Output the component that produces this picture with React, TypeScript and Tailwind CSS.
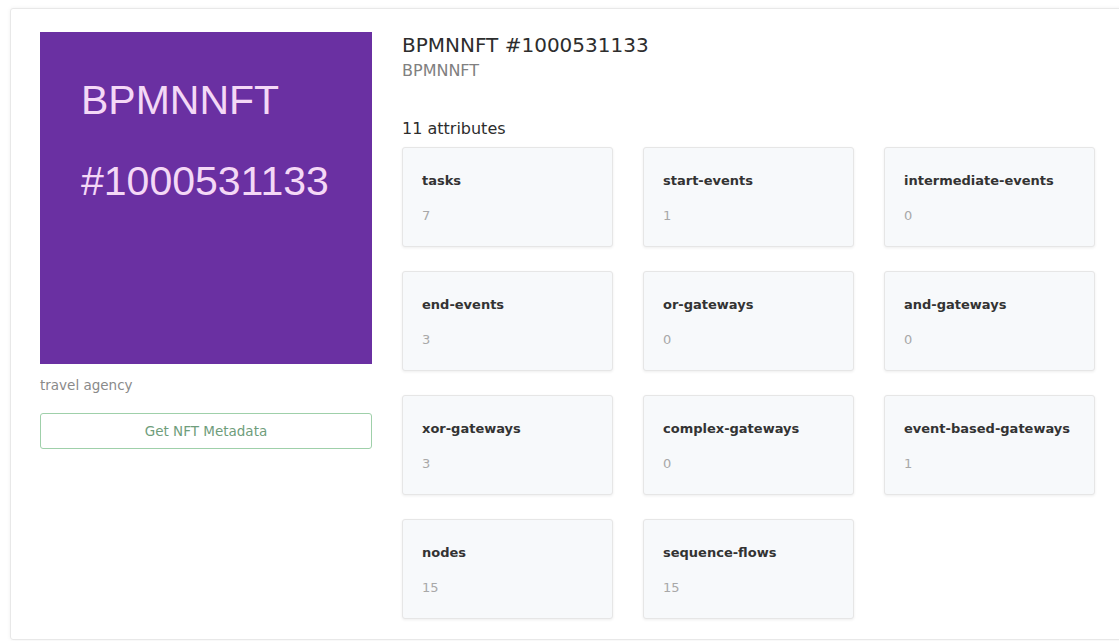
import React from 'react';

interface Attribute {
    name: string;
    value: number;
}

const attributes: Attribute[] = [
    { name: 'tasks', value: 7 },
    { name: 'start-events', value: 1 },
    { name: 'intermediate-events', value: 0 },
    { name: 'end-events', value: 3 },
    { name: 'or-gateways', value: 0 },
    { name: 'and-gateways', value: 0 },
    { name: 'xor-gateways', value: 3 },
    { name: 'complex-gateways', value: 0 },
    { name: 'event-based-gateways', value: 1 },
    { name: 'nodes', value: 15 },
    { name: 'sequence-flows', value: 15 },
];

const font = { fontFamily: '"DejaVu Sans", Verdana, sans-serif' };

export default function App() {
    return (
        <div className="h-[641px] overflow-hidden bg-white pl-[10px] pt-[8px]" style={font}>
            <div className="flex h-[632px] w-[1120px] gap-[30px] rounded-[3px] border border-[#e8e8e8] pl-[29px] pt-[23px] shadow-[0_0_4px_rgba(0,0,0,0.06)]">
                {/* Token image + actions */}
                <div className="w-[332px] shrink-0">
                    <div
                        className="h-[332px] w-[332px] bg-[#6a30a2] pl-[41px] pt-[48px] text-[41px] leading-[40px] text-[#f4d8f6]"
                        style={{ fontFamily: '"Liberation Sans", Arial, sans-serif' }}
                    >
                        <div>BPMNNFT</div>
                        <div className="mt-[41px]">#1000531133</div>
                    </div>
                    <div className="mt-[12px] text-[13.5px] leading-[18px] text-[#8a8a8a]">travel agency</div>
                    <button className="mt-[19px] flex h-[36px] w-full items-center justify-center rounded-[3px] border border-[#9fd0aa] bg-white text-[13.5px] text-[#6f9d7b]">
                        Get NFT Metadata
                    </button>
                </div>

                {/* Token details */}
                <div className="flex-1">
                    <h5 className="mt-[1px] text-[20px] leading-[24px] text-[#2d2d2d]">BPMNNFT #1000531133</h5>
                    <h6 className="mt-[4px] text-[16px] leading-[20px] text-[#808080]">BPMNNFT</h6>
                    <p className="mt-[38px] text-[16px] leading-[20px] text-[#2d2d2d]">{attributes.length} attributes</p>

                    <div className="mt-[8px] grid grid-cols-[211px_211px_211px] gap-x-[30px] gap-y-[24px]">
                        {attributes.map((attr) => (
                            <div
                                key={attr.name}
                                className="h-[100px] rounded-[3px] border border-[#e6e6e6] bg-[#f7f9fb] pl-[19px] pt-[24px] shadow-[0_1px_3px_rgba(0,0,0,0.07)]"
                            >
                                <div className="text-[13px] font-bold leading-[18px] text-[#333]">{attr.name}</div>
                                <div className="mt-[17px] text-[13px] leading-[18px] text-[#a8a8a8]">{attr.value}</div>
                            </div>
                        ))}
                    </div>
                </div>
            </div>
        </div>
    );
}
